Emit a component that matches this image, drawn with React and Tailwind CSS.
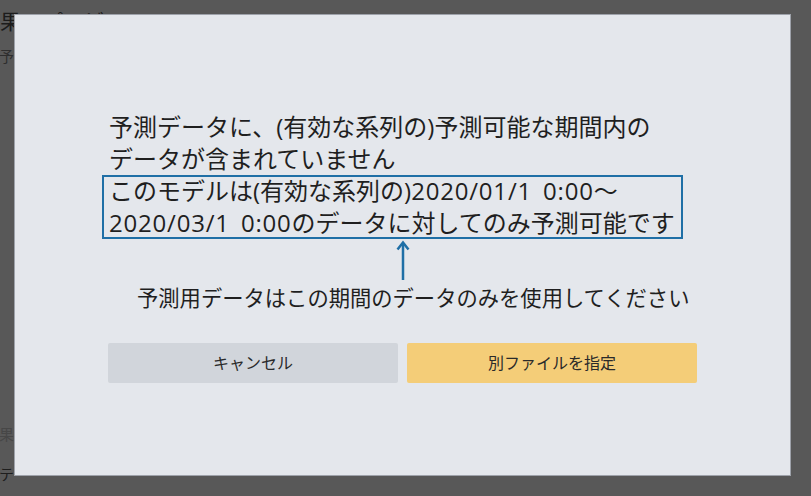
export default function App() {
  const jp = { fontFamily: '"Open Sans", "Noto Sans CJK JP", sans-serif' };
  return (
    <div className="relative w-[811px] h-[496px] overflow-hidden bg-[#585858]" style={jp}>
      {/* background page (under overlay) */}
      <div className="flex flex-col pt-[6px]">
        <div className="-ml-[21px] text-[21px] leading-[30px] text-[#1c1c1c] whitespace-nowrap">結果のプレビュー</div>
        <div className="mt-[10px] -ml-px text-[15px] leading-[20px] text-[#2e2e2e]">予</div>
        <div className="mt-[358px] -ml-px text-[15px] leading-[20px] text-[#474747]">果</div>
        <div className="mt-[20px] -ml-px text-[15px] leading-[20px] text-[#1e1e1e]">テ</div>
      </div>

      {/* overlay modal */}
      <div className="absolute inset-0">
        <div className="ml-[14px] mt-[14px] w-[777px] h-[462px] bg-[#e4e7ec] border border-[#9ea2aa] pl-[94px] pt-[96px]">
          <div className="text-[24px] leading-[32px] text-[#1f1f1f]">
            <div className="whitespace-nowrap">予測データに、(有効な系列の)予測可能な期間内の</div>
            <div className="whitespace-nowrap">データが含まれていません</div>
            <div className="-ml-[7px] w-[581px] pl-[7px] shadow-[inset_0_0_0_2px_#1f6fa6]">
              <div className="whitespace-nowrap">
                このモデルは(有効な系列の)<span className="tracking-[0.8px]">2020/01/1</span>
                <span className="inline-block w-[11px]"></span>
                <span className="tracking-[0.8px]">0:00</span>～
              </div>
              <div className="whitespace-nowrap">
                <span className="tracking-[0.8px]">2020/03/1</span>
                <span className="inline-block w-[11px]"></span>
                <span className="tracking-[0.8px]">0:00</span>のデータに対してのみ予測可能です
              </div>
            </div>
          </div>
          <div className="ml-[287px] mt-[1px] h-[41px] w-[14px]">
            <svg width="14" height="41" viewBox="0 0 14 41">
              <path d="M7 3 V40" stroke="#1f6fa6" strokeWidth="2.5" fill="none" />
              <path d="M1.5 9.5 L7 2.5 L12.5 9.5" stroke="#1f6fa6" strokeWidth="2.5" fill="none" strokeLinejoin="miter" />
            </svg>
          </div>
          <div className="ml-[28px] mt-[4px] text-[21.3px] leading-[26px] text-[#1f1f1f] whitespace-nowrap">
            予測用データはこの期間のデータのみを使用してください
          </div>
          <div className="-ml-[1px] mt-[32px] flex gap-[9px]">
            <button className="w-[290px] h-[40px] rounded-[2px] bg-[#d1d5db] text-[16px] text-[#2a2a2a] flex items-center justify-center">
              キャンセル
            </button>
            <button className="w-[290px] h-[40px] rounded-[2px] bg-[#f4cd78] text-[16px] text-[#2a2a2a] flex items-center justify-center">
              別ファイルを指定
            </button>
          </div>
        </div>
      </div>
    </div>
  );
}
